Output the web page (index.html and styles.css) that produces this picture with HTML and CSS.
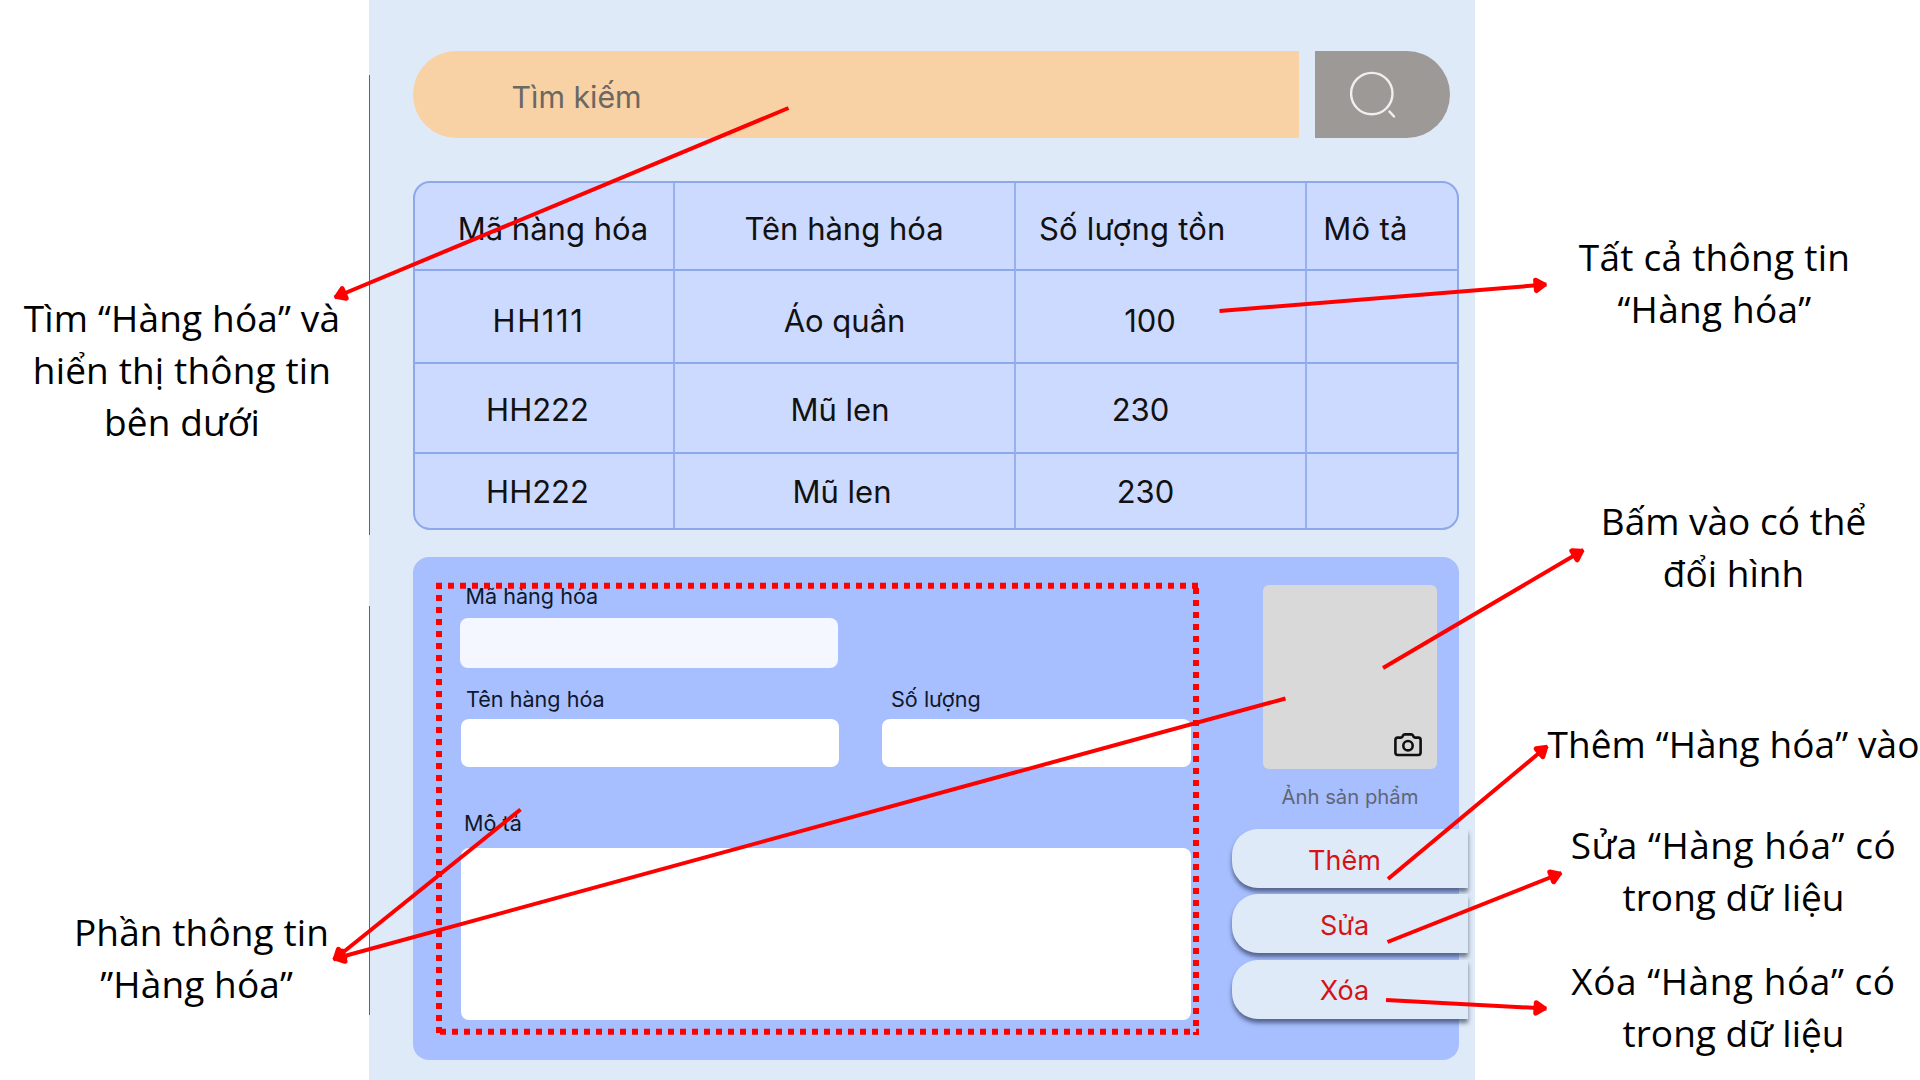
FILE: index.html
```html
<!DOCTYPE html>
<html lang="vi">
<head>
<meta charset="utf-8">
<title>Quản lý hàng hóa</title>
<link rel="stylesheet" href="styles.css">
</head>
<body>
<div class="page">
  <aside class="notes notes-left">
    <p class="note note-search">Tìm “Hàng hóa” và<br>hiển thị thông tin<br>bên dưới</p>
    <p class="note note-info">Phần thông tin<br>”Hàng hóa”&nbsp;</p>
  </aside>

  <main class="panel">
    <div class="search">
      <div class="search-field">Tìm kiếm</div>
      <div class="search-button">
        <svg class="search-icon" viewBox="0 0 48 50" fill="none" stroke="#f1efee" stroke-width="2.4" stroke-linecap="round"><circle cx="21.800" cy="22.600" r="20.700"/><path d="M39.500 40.500L44 45.500"/></svg>
      </div>
    </div>

    <div class="table">
      <div class="cell head c-ma">Mã hàng hóa</div><div class="cell head c-ten">Tên hàng hóa</div><div class="cell head c-sl">Số lượng tồn</div><div class="cell head c-mt">Mô tả</div>
      <div class="cell r1 c-ma">HH111</div><div class="cell r1 c-ten">Áo quần</div><div class="cell r1 c-sl">100</div><div class="cell r1 c-mt"></div>
      <div class="cell r2 c-ma">HH222</div><div class="cell r2 c-ten">Mũ len</div><div class="cell r2 c-sl">230</div><div class="cell r2 c-mt"></div>
      <div class="cell r3 c-ma">HH222</div><div class="cell r3 c-ten">Mũ len</div><div class="cell r3 c-sl">230</div><div class="cell r3 c-mt"></div>
    </div>

    <div class="form">
      <div class="fields">
        <div class="label label-code">Mã hàng hóa</div>
        <div class="input input-code"></div>
        <div class="field-row">
          <div class="field-name">
            <div class="label label-name">Tên hàng hóa</div>
            <div class="input"></div>
          </div>
          <div class="field-qty">
            <div class="label label-qty">Số lượng</div>
            <div class="input"></div>
          </div>
        </div>
        <div class="label label-desc">Mô tả</div>
        <div class="input textarea"></div>
      </div>
      <div class="side">
        <div class="photo">
          <svg class="camera" viewBox="0 0 28 24" fill="none" stroke="#111" stroke-width="2.6" stroke-linejoin="round"><path d="M3.600 4.600H6.800Q7.800 4.600 8.300 3.800L9.100 2.300Q9.600 1.400 10.700 1.400H17.300Q18.400 1.400 18.900 2.300L19.700 3.800Q20.200 4.600 21.200 4.600H24.400Q26.600 4.600 26.600 7V19.600Q26.600 22 24.400 22H3.600Q1.400 22 1.400 19.600V7Q1.400 4.600 3.600 4.600Z"/><circle cx="14" cy="12.700" r="4.700"/></svg>
        </div>
        <div class="caption">Ảnh sản phẩm</div>
        <div class="buttons">
          <div class="button">Thêm</div>
          <div class="button">Sửa</div>
          <div class="button">Xóa</div>
        </div>
      </div>
    </div>
  </main>

  <aside class="notes notes-right">
    <p class="note note-all">Tất cả thông tin<br>“Hàng hóa”</p>
    <p class="note note-photo">Bấm vào có thể<br>đổi hình</p>
    <p class="note note-add">Thêm “Hàng hóa” vào</p>
    <p class="note note-edit"><span class="wide">Sửa “Hàng hóa” có</span><br>trong dữ liệu</p>
    <p class="note note-delete"><span class="wide">Xóa “Hàng hóa” có</span><br>trong dữ liệu</p>
  </aside>

  <svg class="overlay" viewBox="0 0 1920 1080" fill="none" stroke="#ff0000" stroke-width="4">
    <defs>
      <marker id="head" markerUnits="userSpaceOnUse" markerWidth="20" markerHeight="20" refX="16" refY="10" orient="auto" viewBox="0 0 20 20">
        <path d="M5.500 4.800L13.500 10L5.500 15.200Z" fill="#ff0000" stroke="#ff0000" stroke-width="5" stroke-linejoin="round"/>
      </marker>
    </defs>
    <g stroke="#5b6675" stroke-width="1"><path d="M369.500 75V535"/><path d="M369.500 606V1015"/></g>
    <g stroke-width="6" stroke-dasharray="6 6">
      <path d="M436 585.700H1199"/><path d="M440 1031.700H1199"/><path d="M439 583V1033"/><path d="M1196 588V1035"/>
    </g>
    <g marker-end="url(#head)">
      <path d="M788.500 108L334.500 297.500"/>
      <path d="M1219.500 311L1546.500 284.500"/>
      <path d="M1383 668L1583.500 550"/>
      <path d="M1388 879L1547.500 746"/>
      <path d="M1387.500 942L1561.500 873"/>
      <path d="M1386 1000L1546.500 1008.500"/>
      <path d="M520.500 809.500L333.500 960"/>
      <path d="M1285.500 698.500L333.500 959"/>
    </g>
  </svg>
</div>
</body>
</html>
```
FILE: styles.css
```css
* { box-sizing: border-box; }
body { margin: 0; background: #fff; overflow: hidden; }
.page { position: relative; width: 1920px; height: 1080px; display: grid; grid-template-columns: 369px 1106px 445px; overflow: hidden; }
.overlay { position: absolute; left: 0; top: 0; width: 1920px; height: 1080px; }

/* annotations */
.notes { display: flex; flex-direction: column; font: 37px/52px "Open Sans", sans-serif; color: #000; text-align: center; white-space: nowrap; }
.note { margin: 0; }
.notes-left { padding-top: 292px; }
.note-search { width: 364px; letter-spacing: .15px; }
.note-info { margin: 458px 0 0 34px; letter-spacing: .1px; }
.notes-right { padding-top: 230.5px; }
.note-all { margin-left: 34px; letter-spacing: .25px; }
.note-photo { margin: 160px 0 0 72px; }
.note-add { margin: 119.5px 0 0 72px; letter-spacing: .1px; }
.note-edit { margin: 49px 0 0 72px; }
.note-delete { margin: 32px 0 0 72px; }
.wide { letter-spacing: .55px; }

/* panel */
.panel { background: #dfeaf8; padding: 51px 0 0 44px; font-family: Inter, sans-serif; color: #111; }
.search { display: flex; gap: 16px; height: 87px; }
.search-field { width: 885.5px; border-radius: 43.5px 0 0 43.5px; background: #f8d1a4; color: #6b6863; font-size: 30.3px; line-height: 40px; padding: 26px 0 0 98.5px; }
.search-button { width: 135.5px; border-radius: 0 43.5px 43.5px 0; background: #9d9997; padding: 20px 0 0 35px; }
.search-icon { width: 48px; height: 50px; display: block; }

.table { margin-top: 43px; width: 1046px; height: 349px; border: 2px solid #8ea8ec; border-radius: 17px; background: #cddaff; overflow: hidden; display: grid; grid-template-columns: 260px 341px 291px 150px; grid-template-rows: 88px 93px 90px 74px; }
.cell { font-size: 31px; line-height: 40px; white-space: nowrap; border-right: 2px solid #98b0ee; border-bottom: 2px solid #8ea8ec; text-align: center; }
.c-mt { border-right: 0; }
.r3 { border-bottom: 0; padding-top: 18px; }
.head { padding-top: 26px; }
.r1 { padding-top: 30px; }
.r2 { padding-top: 26px; }
.c-ma { padding-right: 13px; }
.c-sl { padding-right: 40px; }
.head.c-ma { padding-left: 18px; padding-right: 0; }
.head.c-ten { padding-right: 1px; }
.head.c-sl { letter-spacing: .2px; padding-right: 56.5px; }
.head.c-mt { letter-spacing: .3px; padding-right: 33px; }
.r1.c-ma { letter-spacing: 1.6px; padding-right: 11px; }
.r1.c-sl { padding-right: 21px; }
.r3.c-sl { padding-right: 30px; }
.r2.c-ten { padding-right: 9px; }
.r3.c-ten { padding-right: 5px; }

.form { margin-top: 26.5px; width: 1046px; height: 503.5px; border-radius: 16px; background: #a7bffe; display: flex; gap: 41px; padding-left: 47px; }
.fields { width: 731px; flex: none; padding-top: 25px; }
.label { font-size: 21.6px; line-height: 28px; white-space: nowrap; color: #10172a; }
.label-code { padding-left: 5.5px; }
.label-name { padding-left: 5px; }
.label-qty { padding-left: 9px; }
.label-desc { padding-left: 4px; margin-top: 42px; }
.input { background: #fff; border-radius: 8px; height: 48.5px; margin-top: 6px; }
.input-code { width: 378px; height: 50px; margin-top: 8.5px; background: #f4f7ff; }
.field-row { display: flex; gap: 43px; margin: 16.5px 0 0 1px; }
.field-name { width: 378px; }
.field-qty { width: 308.5px; }
.textarea { margin: 11px 0 0 1px; height: 172px; }

.side { width: 236px; flex: none; padding-top: 28.5px; }
.photo { width: 174.5px; height: 183.5px; margin-left: 30.7px; border-radius: 6px; background: #d9d9d9; display: flex; justify-content: flex-end; align-items: flex-end; padding: 0 15.5px 12px 0; }
.camera { width: 28px; height: 24px; }
.caption { margin-top: 14.5px; text-align: center; font-size: 20.3px; line-height: 28px; color: #5f6676; }
.buttons { display: flex; flex-direction: column; gap: 6.3px; margin-top: 18px; }
.button { height: 59px; border-radius: 26px 0 0 26px; background: #dfeaf8; box-shadow: 0 4px 4px rgba(30, 40, 70, .6); color: #d41316; font-size: 27px; line-height: 56px; text-align: center; padding: 3.5px 11px 0 0; }
```
